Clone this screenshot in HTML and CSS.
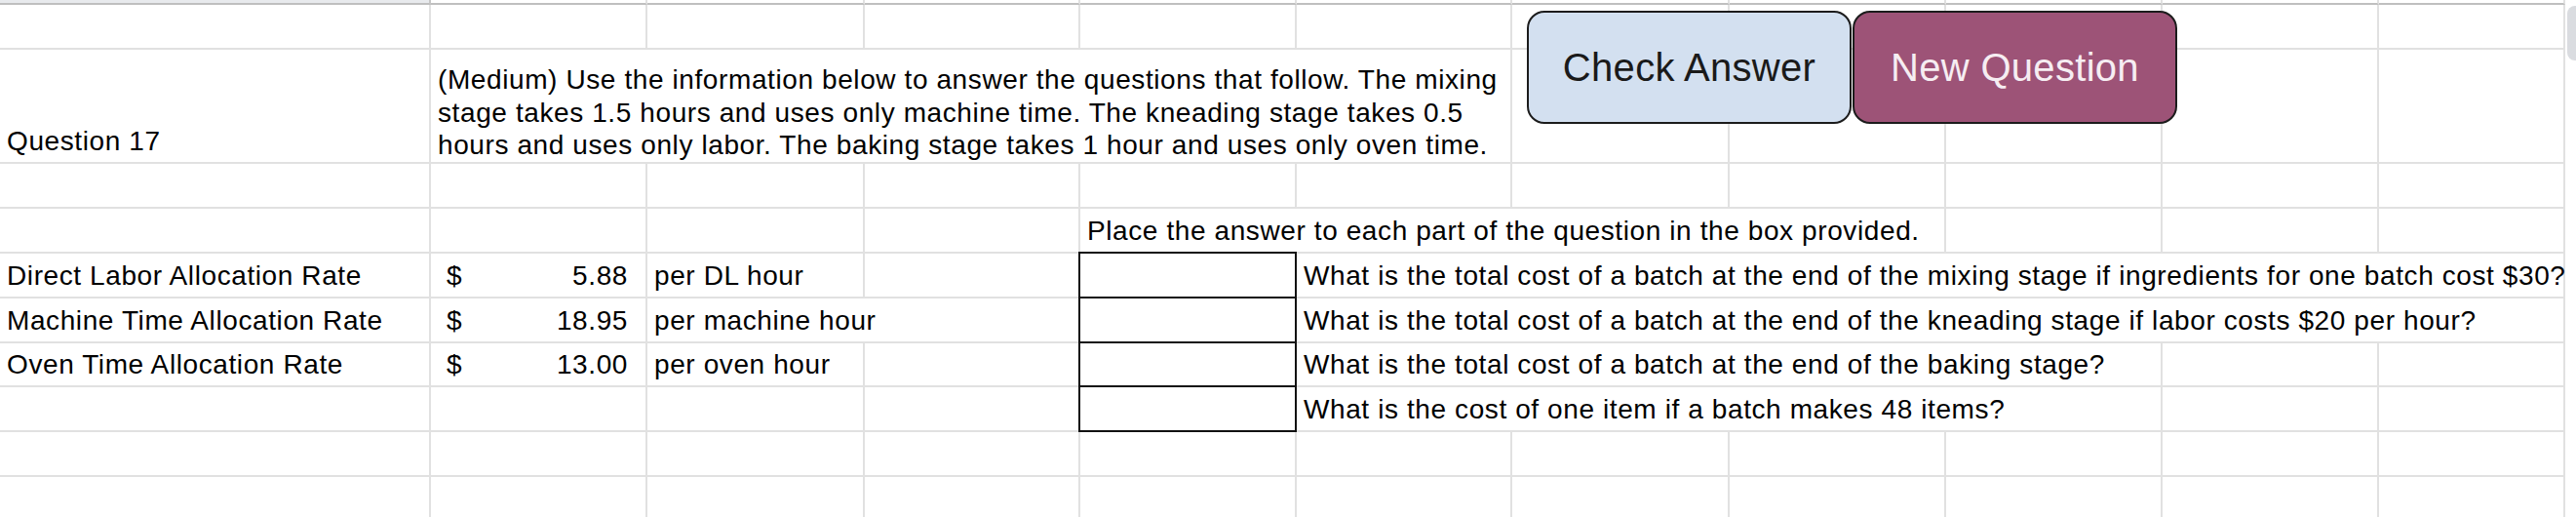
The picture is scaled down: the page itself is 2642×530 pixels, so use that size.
FILE: index.html
```html
<!DOCTYPE html>
<html lang="en">
<head>
    <meta charset="UTF-8">
    <meta name="viewport" content="width=device-width, initial-scale=1.0">
    <title>Question 17</title>
    <link rel="stylesheet" href="styles.css">
</head>
<body>
    <div class="sheet">
        <div class="scrollbar"><div class="thumb"></div></div>

        <!-- resto da linha de cabeçalho congelada -->
        <div class="cell top top-a"></div>
        <div class="cell top"></div>
        <div class="cell top"></div>
        <div class="cell top"></div>
        <div class="cell top"></div>
        <div class="cell top"></div>
        <div class="cell top"></div>
        <div class="cell top"></div>
        <div class="cell top"></div>
        <div class="cell top"></div>
        <div class="cell top"></div>

        <!-- linha 1 -->
        <div class="cell"></div>
        <div class="cell"></div>
        <div class="cell"></div>
        <div class="cell"></div>
        <div class="cell"></div>
        <div class="cell"></div>
        <div class="cell"></div>
        <div class="cell"></div>
        <div class="cell"></div>
        <div class="cell"></div>
        <div class="cell"></div>

        <!-- linha 2: enunciado -->
        <div class="cell">Question 17</div>
        <div class="cell prompt span-5">(Medium) Use the information below to answer the questions that follow. The mixing<br>stage takes 1.5 hours and uses only machine time. The kneading stage takes 0.5<br>hours and uses only labor. The baking stage takes 1 hour and uses only oven time.</div>
        <div class="cell"></div>
        <div class="cell"></div>
        <div class="cell"></div>
        <div class="cell"></div>
        <div class="cell"></div>

        <!-- linha 3 -->
        <div class="cell"></div>
        <div class="cell"></div>
        <div class="cell"></div>
        <div class="cell"></div>
        <div class="cell"></div>
        <div class="cell"></div>
        <div class="cell"></div>
        <div class="cell"></div>
        <div class="cell"></div>
        <div class="cell"></div>
        <div class="cell"></div>

        <!-- linha 4 -->
        <div class="cell"></div>
        <div class="cell"></div>
        <div class="cell"></div>
        <div class="cell"></div>
        <div class="cell span-4">Place the answer to each part of the question in the box provided.</div>
        <div class="cell"></div>
        <div class="cell"></div>
        <div class="cell"></div>

        <!-- linha 5 -->
        <div class="cell">Direct Labor Allocation Rate</div>
        <div class="cell rate"><span>$</span><span>5.88</span></div>
        <div class="cell">per DL hour</div>
        <div class="cell"></div>
        <div class="cell answer"></div>
        <div class="cell span-6">What is the total cost of a batch at the end of the mixing stage if ingredients for one batch cost $30?</div>

        <!-- linha 6 -->
        <div class="cell">Machine Time Allocation Rate</div>
        <div class="cell rate"><span>$</span><span>18.95</span></div>
        <div class="cell span-2">per machine hour</div>
        <div class="cell answer"></div>
        <div class="cell span-6">What is the total cost of a batch at the end of the kneading stage if labor costs $20 per hour?</div>

        <!-- linha 7 -->
        <div class="cell">Oven Time Allocation Rate</div>
        <div class="cell rate"><span>$</span><span>13.00</span></div>
        <div class="cell">per oven hour</div>
        <div class="cell"></div>
        <div class="cell answer"></div>
        <div class="cell span-4">What is the total cost of a batch at the end of the baking stage?</div>
        <div class="cell"></div>
        <div class="cell"></div>

        <!-- linha 8 -->
        <div class="cell"></div>
        <div class="cell"></div>
        <div class="cell"></div>
        <div class="cell"></div>
        <div class="cell answer"></div>
        <div class="cell span-4">What is the cost of one item if a batch makes 48 items?</div>
        <div class="cell"></div>
        <div class="cell"></div>

        <!-- linha 9 -->
        <div class="cell"></div>
        <div class="cell"></div>
        <div class="cell"></div>
        <div class="cell"></div>
        <div class="cell"></div>
        <div class="cell"></div>
        <div class="cell"></div>
        <div class="cell"></div>
        <div class="cell"></div>
        <div class="cell"></div>
        <div class="cell"></div>

        <!-- linha 10 -->
        <div class="cell"></div>
        <div class="cell"></div>
        <div class="cell"></div>
        <div class="cell"></div>
        <div class="cell"></div>
        <div class="cell"></div>
        <div class="cell"></div>
        <div class="cell"></div>
        <div class="cell"></div>
        <div class="cell"></div>
        <div class="cell"></div>

        <!-- botões desenhados sobre a planilha -->
        <div class="actions">
            <button type="button" class="btn btn-check">Check Answer</button>
            <button type="button" class="btn btn-new">New Question</button>
        </div>
    </div>
</body>
</html>
```

FILE: styles.css
```css
* {
    margin: 0;
    padding: 0;
    box-sizing: border-box;
}

html, body {
    overflow: hidden;
}

body {
    background-color: #fff;
    font-family: 'Liberation Sans', Arial, sans-serif;
    color: #000;
}

.sheet {
    position: relative;
    display: grid;
    grid-template-columns: 442px 222px 223px 221px 222px 221px 223px 222px 222px 222px 191px 11px;
    grid-template-rows: 5px 46px 117px 46px 46px 46px 46px 45px 46px 46px 46px;
    width: 2642px;
}

.cell {
    display: flex;
    align-items: flex-end;
    padding: 0 7px 6px;
    border-right: 2px solid #e1e1e1;
    border-bottom: 2px solid #e1e1e1;
    font-size: 28px;
    letter-spacing: 0.6px;
    line-height: 31px;
    white-space: nowrap;
}

.top {
    padding: 0;
    border-bottom-color: #bfbfbf;
}

.top-a {
    background: #e8eaed;
    border-right-color: #c6c6c6;
}

.span-2 { grid-column: span 2; }
.span-4 { grid-column: span 4; }
.span-5 { grid-column: span 5; }
.span-6 { grid-column: span 6; }

.prompt {
    display: block;
    align-self: stretch;
    padding-top: 14px;
    padding-bottom: 4px;
    line-height: 33.5px;
}

.rate {
    justify-content: space-between;
    padding-left: 16px;
    padding-right: 18px;
}

.answer {
    margin: -2px 0 0 -2px;
    border: 2px solid #111;
}

.scrollbar {
    grid-column: 12;
    grid-row: 1 / -1;
    padding: 6px 0 0 2px;
}

.thumb {
    height: 56px;
    background: #dadce0;
    border-radius: 8px 0 0 8px;
}

.actions {
    position: absolute;
    left: 1566px;
    top: 11px;
    display: flex;
    gap: 1px;
}

.btn {
    width: 333px;
    height: 116px;
    border: 2px solid #1c1c1c;
    border-radius: 18px;
    font-family: 'Liberation Sans', Arial, sans-serif;
    font-size: 40px;
    letter-spacing: 0.3px;
    cursor: pointer;
}

.btn-check {
    background: #d3e0f0;
    color: #1a1a1a;
}

.btn-new {
    background: #9d5377;
    color: #f6edf2;
}
```
